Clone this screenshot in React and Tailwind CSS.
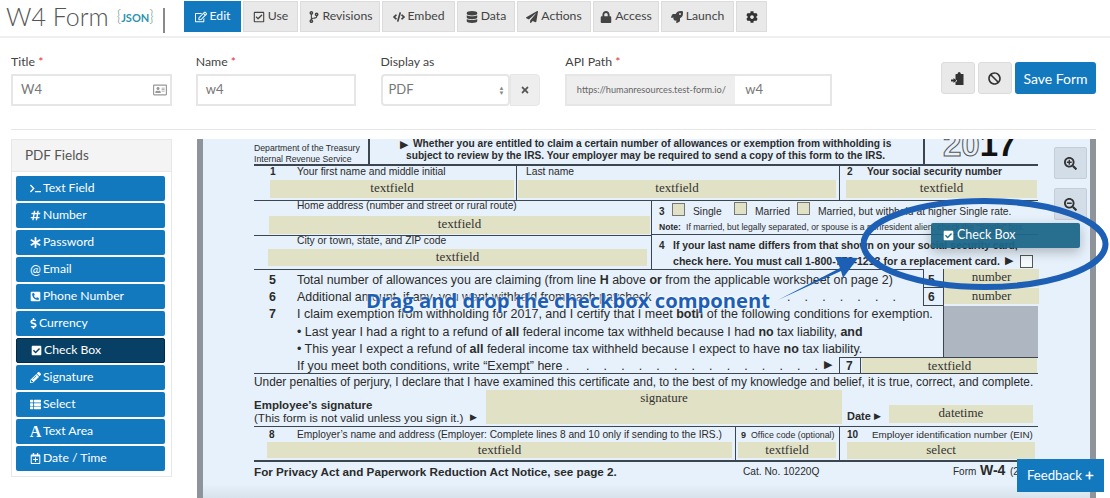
import React from "react";
import {
  FaRegEdit, FaRegCheckSquare, FaCodeBranch, FaCode, FaDatabase, FaPaperPlane, FaLock, FaRocket, FaCog,
  FaTerminal, FaHashtag, FaAsterisk, FaPhoneSquareAlt, FaDollarSign, FaCheckSquare, FaPencilAlt, FaThList,
  FaRegCalendarPlus, FaSearchPlus, FaSearchMinus, FaBan, FaTimes, FaPlus, FaRegAddressCard,
} from "react-icons/fa";

const tabs = [
  [FaRegEdit, "Edit", "w-[57px]", true], [FaRegCheckSquare, "Use", "w-[55px]"], [FaCodeBranch, "Revisions", "w-[80px]"],
  [FaCode, "Embed", "w-[73px]"], [FaDatabase, "Data", "w-[58px]"], [FaPaperPlane, "Actions", "w-[74px]"],
  [FaLock, "Access", "w-[66px]"], [FaRocket, "Launch", "w-[73px]"],
];
const AtGlyph = () => <span className="text-[13px] leading-none">@</span>;
const AGlyph = () => <span className="font-['Liberation_Serif',serif] font-bold text-[16px] leading-none">A</span>;
const fields = [
  [FaTerminal, "Text Field"], [FaHashtag, "Number"], [FaAsterisk, "Password"], [AtGlyph, "Email"],
  [FaPhoneSquareAlt, "Phone Number"], [FaDollarSign, "Currency", false, true], [FaCheckSquare, "Check Box", true],
  [FaPencilAlt, "Signature"], [FaThList, "Select"], [AGlyph, "Text Area"], [FaRegCalendarPlus, "Date / Time"],
];
// Everything on the PDF sheet sits on a free canvas: [x, y, text, size, bold]
const ox = 203, oy = 139;
const labels = [
  [254, 142, "Department of the Treasury", 8.7], [254, 152.5, "Internal Revenue Service", 8.7],
  [400, 138, "\u25B6", 11], [413, 138, "Whether you are entitled to claim a certain number of allowances or exemption from withholding is", 10.2, 1],
  [406, 150, "subject to review by the IRS. Your employer may be required to send a copy of this form to the IRS.", 10.2, 1],
  [270, 166, "1", 10.2, 1], [297, 166, "Your first name and middle initial", 10.3], [526, 166, "Last name", 10.3],
  [847, 166, "2", 10.1, 1], [867, 166, "Your social security number", 10.1, 1],
  [297, 200, "Home address (number and street or rural route)", 10.2], [297, 235, "City or town, state, and ZIP code", 10.3],
  [659, 206, "3", 10, 1], [693, 206, "Single", 10.3], [755, 206, "Married", 10.3], [818, 206, "Married, but withhold at higher Single rate.", 10.3],
  [659, 221, "Note:", 8.6, 1], [686, 221, "If married, but legally separated, or spouse is a nonresident alien, check the \u201cSingle\u201d box.", 8.6],
  [659, 240, "4", 10, 1], [673, 240, "If your last name differs from that shown on your social security card,", 10.4, 1],
  [673, 255, "check here. You must call 1-800-772-1213 for a replacement card.", 10.6, 1],
  [1005, 254, "\u25B6", 11],
  [269, 274, "5", 12.4, 1], [297, 274, <>Total number of allowances you are claiming (from line <b>H</b> above <b>or</b> from the applicable worksheet on page 2)</>, 12.42],
  [269, 291, "6", 12.4, 1], [297, 291, <>Additional amount, if any, you want withheld from each paycheck</>, 12.4],
  [269, 308, "7", 12.4, 1], [297, 308, <>I claim exemption from withholding for 2017, and I certify that I meet <b>both</b> of the following conditions for exemption.</>, 12.53],
  [297, 326, <>{"\u2022 "}Last year I had a right to a refund of <b>all</b> federal income tax withheld because I had <b>no</b> tax liability, <b>and</b></>, 12.45],
  [297, 343, <>{"\u2022 "}This year I expect a refund of <b>all</b> federal income tax withheld because I expect to have <b>no</b> tax liability.</>, 12.48],
  [297, 360, "If you meet both conditions, write \u201cExempt\u201d here .", 12.5],
  [824, 358, "\u25B6", 11], [846, 360, "7", 12, 1], [928, 274, "5", 12, 1], [928, 291, "6", 12, 1],
  [254, 376, "Under penalties of perjury, I declare that I have examined this certificate and, to the best of my knowledge and belief, it is true, correct, and complete.", 11.85],
  [254, 399, "Employee\u2019s signature", 11.5, 1], [254, 412, "(This form is not valid unless you sign it.)", 11.6], [470, 411, "\u25B6", 9],
  [847, 410, "Date", 11, 1], [874, 410, "\u25B6", 9],
  [269, 429, "8", 10, 1], [297, 429, "Employer\u2019s name and address (Employer: Complete lines 8 and 10 only if sending to the IRS.)", 10.2],
  [741, 429, "9", 9, 1], [751, 429, "Office code (optional)", 8.8], [847, 429, "10", 10, 1], [872, 429, "Employer identification number (EIN)", 9.85],
  [254, 466, "For Privacy Act and Paperwork Reduction Act Notice, see page 2.", 11.7, 1], [743, 466, "Cat. No. 10220Q", 10.2],
  [953, 466, "Form", 10], [980, 464, "W-4", 14, 1], [1010, 466, "(2017)", 10],
];
// dotted leaders: [x, y, dots]
const leaders = [[787, 291, ". . . . . . ."], [586, 360, ". . . . . . . . . . . . . ."]];
// [x, y, w, h, text]
const boxes = [
  [270, 180, 244, 18, "textfield"], [518, 180, 318, 18, "textfield"], [846, 180, 191, 18, "textfield"],
  [269, 216, 381, 18, "textfield"], [268, 249, 379, 17, "textfield"],
  [944, 269, 95, 18, "number"], [944, 288, 95, 16, "number"], [862, 358, 175, 15, "textfield"],
  [486, 390, 356, 34, "signature"], [889, 405, 144, 18, "datetime"],
  [267, 442, 465, 16, "textfield"], [738, 442, 98, 16, "textfield"], [847, 442, 188, 17, "select"],
];
// [x, y, w, h]
const rules = [
  [254, 164, 784, 1.5], [368, 139, 1.5, 25], [923, 139, 1.5, 25], [516, 165, 1, 35], [839, 165, 1, 35],
  [254, 200, 784, 1], [651, 234, 387, 1], [254, 235, 397, 1], [254, 269, 669, 1], [651, 200, 1, 69],
  [923, 269, 1, 36], [943, 269, 1, 88], [923, 287, 20, 1], [923, 305, 20, 1], [839, 357, 199, 1],
  [839, 357, 1, 16], [860, 357, 1, 16], [254, 373, 784, 1], [254, 426, 784, 1], [735, 426, 1, 34], [839, 426, 1, 34], [254, 460, 784, 1.5],
];
const squares = [[672, 203], [734, 202], [797, 202]];

function Tab({ icon: Icon, text, w, active }) {
  return (
    <div className={`${w} h-[31px] flex items-center justify-center gap-[3px] text-[12.2px] border ${active ? "bg-[#1279bf] border-[#1279bf] text-white" : "bg-[#e9e9e9] border-[#dcdcdc] text-[#444]"}`}>
      <Icon className="text-[12px]" /><span>{text}</span>
    </div>
  );
}
function Label({ children, req }) {
  return <div className="text-[12.3px] leading-[16px] text-[#444] mb-[4px]">{children}{req && <span className="text-[#e8303c]"> *</span>}</div>;
}
function GrayBtn({ children }) {
  return <div className="w-[34px] h-[32px] rounded-[3px] bg-[#e9e9e9] border border-[#dcdcdc] flex items-center justify-center text-[#333] text-[13px]">{children}</div>;
}

export default function App() {
  return (
    <div className="relative w-[1110px] h-[498px] overflow-hidden bg-white font-['Lato',sans-serif]">
      <header className="h-[38px] flex items-start border-b-2 border-[#efefef]">
        <div className="w-[163px] h-[31px] mt-[1px] pl-[6px] flex items-center text-[25px] font-light text-[#555] whitespace-nowrap shrink-0">
          W4 Form
          <span className="ml-[8px] text-[15px] text-[#6b8f80]">{"{"}<span className="text-[11px] font-bold text-[#2f93b0]">JSON</span>{"}"}</span>
        </div>
        <div className="w-[2px] h-[25px] mt-[8px] bg-[#8a8a8a] mr-[19px]" />
        <nav className="flex gap-[2px] mt-[1px]">
          {tabs.map(([I, t, w, a]) => <Tab key={t} icon={I} text={t} w={w} active={a} />)}
          <div className="w-[31px] h-[31px] flex items-center justify-center bg-[#e9e9e9] border border-[#dcdcdc] text-[#333] text-[12px]"><FaCog /></div>
        </nav>
      </header>

      <section className="h-[92px] ml-[11px] mr-[14px] pt-[16px] flex border-b border-[#e6e6e6] text-[#777]">
        <div className="w-[161px] mr-[24px]">
          <Label req>Title</Label>
          <div className="h-[32px] border-2 border-[#e6e6e6] px-[8px] flex items-center justify-between text-[13px]">W4<FaRegAddressCard className="text-[#999] -mr-[5px] text-[14px]" /></div>
        </div>
        <div className="w-[160px] mr-[25px]">
          <Label req>Name</Label>
          <div className="h-[32px] border-2 border-[#e6e6e6] px-[8px] flex items-center text-[13px]">w4</div>
        </div>
        <div className="w-[160px] mr-[25px]">
          <Label>Display as</Label>
          <div className="flex h-[32px]">
            <div className="w-[129px] border-2 border-[#e6e6e6] rounded-[4px] pl-[6px] pr-[3px] flex items-center justify-between text-[13px]">PDF
              <span className="flex flex-col text-[6px] leading-[5px] text-[#888]"><span>▲</span><span>▼</span></span>
            </div>
            <div className="flex-1 bg-[#eee] border border-[#e6e6e6] rounded-r-[4px] flex items-center justify-center text-[#555] text-[10px]"><FaTimes /></div>
          </div>
        </div>
        <div className="w-[267px]">
          <Label req>API Path</Label>
          <div className="flex h-[32px] border-2 border-[#e6e6e6]">
            <div className="w-[168px] bg-[#eee] text-[9.2px] flex items-center justify-center text-[#666] whitespace-nowrap">https://humanresources.test-form.io/</div>
            <div className="flex-1 bg-white text-[13px] flex items-center px-[10px]">w4</div>
          </div>
        </div>
        <div className="ml-[109px] mt-[8px] flex gap-[3px] items-start self-start">
          <GrayBtn>
            <svg width="14" height="15" viewBox="0 0 14 15" fill="currentColor">
              <path d="M5 3h1.500C6.700 1.700 7.400 1 8.200 1s1.500.7 1.700 2H12.500v11H4.500v-3.500H6L6 9 4.500 9V3.500z" />
              <path d="M0 8.500h2.500V7l3 2.500L2.500 12v-1.500H0z" />
            </svg>
          </GrayBtn>
          <GrayBtn><FaBan /></GrayBtn>
          <div className="w-[81px] h-[32px] rounded-[3px] bg-[#1279bf] text-white flex items-center justify-center text-[14px]">Save Form</div>
        </div>
      </section>

      <main className="flex pt-[9px] pl-[11px]">
        <aside className="w-[161px] h-[338px] border border-[#e8e8e8] shrink-0 self-start">
          <div className="h-[32px] pl-[13px] flex items-center bg-[#f4f4f4] border-b border-[#e8e8e8] text-[13.5px] text-[#555]">PDF Fields</div>
          <div className="pl-[4px] pr-[6px] pt-[4px] flex flex-col gap-[2px]">
            {fields.map(([I, t, dark, tight]) => (
              <div key={t} className={`h-[25px] rounded-[2px] pl-[13px] flex items-center gap-[1px] text-white text-[12.2px] ${dark ? "bg-[#083f64] border border-[#052a44]" : "bg-[#1279bf]"}`}>
                <span className={`flex items-center justify-center h-[13px] shrink-0 text-[11px] ${tight ? "w-[9px]" : "w-[13px]"}`}><I /></span><span>{t}</span>
              </div>
            ))}
          </div>
        </aside>
        <div className="relative overflow-hidden ml-[25px] w-[899px] h-[359px] bg-[#e6f1fb] border-x-[6px] border-[#8e949a] font-['Liberation_Sans',sans-serif] text-[#2b2b2b]">
          {rules.map(([x, y, w, h], i) => (
            <div key={i} className="absolute bg-[#3c4650]" style={{ left: x - ox, top: y - oy, width: w, height: h }} />
          ))}
          <div className="absolute bg-[#aeb7c1]" style={{ left: 944 - ox, top: 306 - oy, width: 94, height: 51 }} />
          {boxes.map(([x, y, w, h, t], i) => (
            <div key={i} className="absolute bg-[#e1e1c5] text-center font-['Liberation_Serif',serif] text-[13px] leading-[15px] text-[#333]" style={{ left: x - ox, top: y - oy, width: w, height: h }}>{t}</div>
          ))}
          {squares.map(([x, y], i) => (
            <div key={i} className="absolute w-[13px] h-[13px] bg-[#e1e1c5] border border-[#777]" style={{ left: x - ox, top: y - oy }} />
          ))}
          <div className="absolute w-[13px] h-[13px] bg-[#f5fafe] border border-[#555]" style={{ left: 1020 - ox, top: 255 - oy }} />
          {labels.map(([x, y, t, s, b], i) => (
            <div key={i} className={`absolute whitespace-nowrap leading-[12px] ${b ? "font-bold" : ""}`} style={{ left: x - ox, top: y - oy, fontSize: s }}>{t}</div>
          ))}
          {leaders.map(([x, y, t], i) => (
            <div key={i} className="absolute whitespace-nowrap leading-[12px] text-[12.4px] [word-spacing:10.700px]" style={{ left: x - ox, top: y - oy }}>{t}</div>
          ))}
          <div className="absolute left-[740px] top-[-11px] text-[33px] leading-[34px] font-bold text-[#111] whitespace-nowrap"><span className="text-[#e6f1fb] [-webkit-text-stroke:1px_#555]">20</span>17</div>
          <div className="absolute left-[851px] top-[8px] w-[33px] h-[32px] rounded-[2px] bg-[#d2dde8] border border-[#c3ced9] flex items-center justify-center text-[#333] text-[13px]"><FaSearchPlus /></div>
          <div className="absolute left-[851px] top-[49px] w-[33px] h-[32px] rounded-[2px] bg-[#d2dde8] border border-[#c3ced9] flex items-center justify-center text-[#333] text-[13px]"><FaSearchMinus /></div>
          <div className="absolute bottom-0 left-0 w-full h-[14px] bg-gradient-to-t from-[#00000010] to-transparent" />
        </div>
      </main>

      {/* annotation layer over the sheet */}
      <div className="absolute left-[931px] top-[223px] w-[149px] h-[25px] rounded-[2px] bg-[#1c6689]/95 shadow-[0_4px_12px_rgba(0,0,0,0.25)] flex items-center pl-[12px] gap-[3px] text-white text-[12.5px]"><FaCheckSquare className="text-[11px]" />Check Box</div>
      <svg className="absolute left-[770px] top-[190px] pointer-events-none" width="340" height="130" viewBox="770 190 340 130" fill="none">
        <ellipse cx="984.500" cy="244" rx="121" ry="43" stroke="#1c5fb4" strokeWidth="6" />
        <path d="M778 300 L840 268 L835 257 L858 258 L843 278 L841 271 Z" fill="#1c5fb4" />
      </svg>
      <div className="absolute left-[366px] top-[287px] font-['Open_Sans',sans-serif] text-[20.2px] leading-[26px] font-bold text-[#1c5fb4] whitespace-nowrap [text-shadow:0_0_3px_#fff,0_0_3px_#fff]">Drag and drop the checkbox component</div>
      <div className="absolute left-[1017px] top-[459px] w-[87px] h-[33px] bg-[#1279bf] text-white text-[13.2px] flex items-center justify-center gap-[3px]">Feedback<FaPlus className="text-[9px]" /></div>
    </div>
  );
}
